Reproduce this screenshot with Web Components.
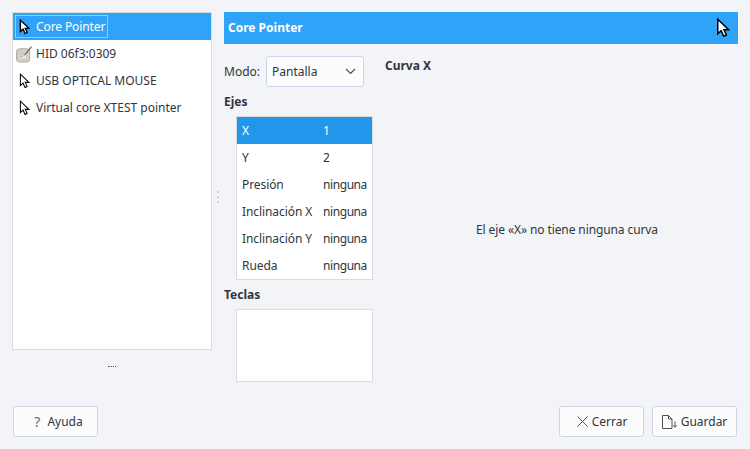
<!DOCTYPE html>
<html><head><meta charset="utf-8">
<style>
html,body{margin:0;padding:0;width:750px;height:449px;overflow:hidden;background:#f3f4f7;font:12px/16px "Noto Sans",sans-serif;color:#31363b}
</style></head><body>
<device-dialog></device-dialog>
<script>
const ARROW=(w,h,sw)=>`<svg width="${w}" height="${h}" viewBox="0 0 12 17" style="display:block"><path d="M1.5 1 V13.5 L4.4 10.9 L6.6 15.6 L8.9 14.5 L6.8 10 H10.8 Z" fill="#fff" stroke="#000" stroke-width="${sw}"/></svg>`;
const TABLET=`<svg width="17" height="18" viewBox="0 0 17 18" style="display:block"><rect x=".5" y="3.5" width="14" height="14" rx="3" fill="#d8d5c8" stroke="#aaa79c"/><rect x="2.5" y="6" width="9" height="8.5" fill="#eceade" stroke="#b5b2a6" stroke-width=".6"/><path d="M3.5 8h6M3.5 10h6M3.5 12h4" stroke="#a09d91" stroke-width=".8"/><path d="M16 .5 L9.5 8.5 L8.5 10.5 L10.5 9.7 L16.8 2 Z" fill="#7b7970"/></svg>`;
function def(name,css,html){
  customElements.define(name,class extends HTMLElement{
    constructor(){super();const s=this.attachShadow({mode:'open'});s.innerHTML=`<style>${css}</style>${typeof html==='function'?html(this):html}`;}
  });
}
def('device-row',`
:host{display:flex;align-items:center;height:27px;padding-left:3px;box-sizing:border-box;color:#31363b}
:host([selected]){background:#2ea3f8;color:#fff;letter-spacing:-.1px}
.ic{width:16px;height:18px;display:flex;justify-content:center;align-items:center;margin-right:4px;flex:none}
.t{white-space:nowrap}
:host([selected]) .t{box-shadow:inset 0 0 0 1px rgba(255,255,255,.45);padding:4px 3px 3px 21px;margin-left:-21px}
`,e=>{
 const sel=e.hasAttribute('selected'),tab=e.getAttribute('kind')==='tablet';
 return `<span class="ic">${tab?TABLET:ARROW(11,16,sel?1.5:1.1)}</span><span class="t"><slot></slot></span>`;
});
def('device-list',`
:host{display:flex;flex-direction:column;width:200px;height:338px;box-sizing:border-box;background:#fff;border:1px solid #dcdcdc}
`,`<slot></slot>`);
def('title-bar',`
:host{display:flex;align-items:center;justify-content:space-between;height:32px;background:#2ea3f8;color:#fff;font-weight:700;padding:0 8px 0 4px;box-sizing:border-box}
`,`<slot></slot>${ARROW(14,20,1.3)}`);
def('combo-box',`
:host{display:flex;align-items:center;justify-content:space-between;width:98px;height:31px;box-sizing:border-box;background:#fcfcfd;border:1px solid #cfd5e6;border-radius:3px;padding:0 7px 0 5px}
svg{display:block}
`,`<slot></slot><svg width="11" height="7" viewBox="0 0 11 7"><path d="M1 1 L5.5 5.5 L10 1" fill="none" stroke="#4d5257" stroke-width="1.2"/></svg>`);
def('axis-table',`
:host{display:block;width:137px;box-sizing:border-box;background:#fff;border:1px solid #dcdcdc}
`,`<slot></slot>`);
def('axis-row',`
:host{display:grid;grid-template-columns:81px 1fr;height:27px;align-items:center;padding-left:5px;box-sizing:border-box;white-space:nowrap}
:host([selected]){background:#2196ea;color:#fff}
.n{letter-spacing:-.08px}
.v{letter-spacing:-.42px}
.v.short{letter-spacing:0}
`,e=>{const v=e.getAttribute('value');return `<span class="n">${e.getAttribute('name')}</span><span class="v${v.length<2?' short':''}">${v}</span>`});
def('push-button',`
:host{display:flex;align-items:center;justify-content:center;gap:3px;width:85px;height:31px;box-sizing:border-box;background:#fcfcfd;border:1px solid #cfd5e6;border-radius:3px}
:host([help]){padding-left:6px}
::slotted(svg){display:block}
`,`<slot></slot>`);
def('device-dialog',`
:host{display:block;width:750px;height:449px;box-sizing:border-box;padding:12px}
.main{display:flex;height:370px}
.left{width:200px;display:flex;flex-direction:column}
.grip{height:1px;width:8px;margin:16px auto 0;border-top:1px dotted #555}
.split{width:12px;display:flex;flex-direction:column;align-items:center;gap:3px;padding-top:179px;box-sizing:border-box}
.split i{width:2px;height:2px;background:#ccd0dc}
.right{width:514px;display:flex;flex-direction:column}
.body{display:flex;flex:1}
.cfg{width:161px;display:flex;flex-direction:column}
.mode{display:flex;align-items:center;gap:6px;margin-top:12px;height:31px}
b{display:block;font-weight:700}
.ejes{margin-top:7px;height:16px}
.tbl{margin:6px 0 0 12px}
.teclas{margin-top:7px;height:16px}
.keys{margin:6px 0 0 12px;width:137px;height:73px;box-sizing:border-box;background:#fff;border:1px solid #dcdcdc}
.curve{flex:1;display:flex;flex-direction:column;min-width:0}
.curve b{margin-top:14px}
.msg{flex:1;display:flex;align-items:center;justify-content:center;margin:4px 0 0 11px;letter-spacing:-.1px}
.foot{display:flex;justify-content:space-between;margin:24px 1px 0}
.r{display:flex;gap:8px}
.q{color:#66696d;font-size:14px;margin-right:4px}
`,`<div class="main">
 <div class="left">
  <device-list>
   <device-row selected>Core Pointer</device-row>
   <device-row kind="tablet">HID 06f3:0309</device-row>
   <device-row>USB OPTICAL MOUSE</device-row>
   <device-row>Virtual core XTEST pointer</device-row>
  </device-list>
  <div class="grip"></div>
 </div>
 <div class="split"><i></i><i></i><i></i></div>
 <div class="right">
  <title-bar>Core Pointer</title-bar>
  <div class="body">
   <div class="cfg">
    <div class="mode"><span>Modo:</span><combo-box>Pantalla</combo-box></div>
    <b class="ejes">Ejes</b>
    <axis-table class="tbl">
     <axis-row selected name="X" value="1"></axis-row>
     <axis-row name="Y" value="2"></axis-row>
     <axis-row name="Presión" value="ninguna"></axis-row>
     <axis-row name="Inclinación X" value="ninguna"></axis-row>
     <axis-row name="Inclinación Y" value="ninguna"></axis-row>
     <axis-row name="Rueda" value="ninguna"></axis-row>
    </axis-table>
    <b class="teclas">Teclas</b>
    <div class="keys"></div>
   </div>
   <div class="curve"><b>Curva X</b><div class="msg">El eje «X» no tiene ninguna curva</div></div>
  </div>
 </div>
</div>
<div class="foot">
 <push-button help><span class="q">?</span>Ayuda</push-button>
 <div class="r">
  <push-button><svg width="13" height="13" viewBox="0 0 13 13"><path d="M1.5 1.5 L11.5 11.5 M11.5 1.5 L1.5 11.5" stroke="#4d5257" stroke-width="1"/></svg>Cerrar</push-button>
  <push-button><svg width="16" height="14" viewBox="0 0 16 14"><path d="M.5 .5 H6.5 L10 4 V13.5 H.5 Z M6.5 .5 V4 H10" fill="none" stroke="#4d5257"/><path d="M13 6.5 V12 M11.3 10.3 L13 12.3 L14.7 10.3" fill="none" stroke="#4d5257"/></svg>Guardar</push-button>
 </div>
</div>`);
</script>
</body></html>
